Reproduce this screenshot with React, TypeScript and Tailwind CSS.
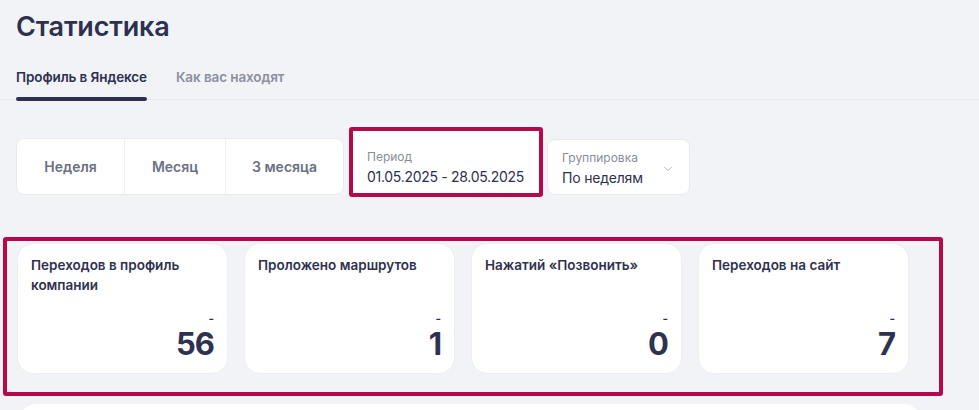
import { ChevronDown } from "lucide-react";

const stats = [
  { title: "Переходов в профиль компании", value: "56" },
  { title: "Проложено маршрутов", value: "1" },
  { title: "Нажатий «Позвонить»", value: "0" },
  { title: "Переходов на сайт", value: "7" },
];

function StatCard({ title, value }: { title: string; value: string }) {
  return (
    <div className="w-[211px] h-[131px] bg-white rounded-[16px] border border-[#eceef3] px-[13px] pt-[11px] pb-[14px] flex flex-col">
      <div className="text-[13.5px] leading-[20px] font-semibold text-[#2f3150] pr-4">{title}</div>
      <div className="mt-auto flex flex-col items-end">
        <div className="mb-[3px] text-[12px] leading-[12px] text-[#2f3150] font-semibold">-</div>
        <div className="text-[31px] leading-[31px] font-bold text-[#2f3150] tracking-[-1px]">{value}</div>
      </div>
    </div>
  );
}

export default function App() {
  return (
    <div
      className="w-[979px] h-[410px] overflow-hidden bg-[#f2f3f7]"
      style={{ fontFamily: "Inter, 'Noto Sans', sans-serif" }}
    >
      {/* Header */}
      <div className="pl-4 pt-[7px]">
        <h1 className="text-[27px] leading-[40px] font-semibold text-[#2e3050] tracking-[-0.2px]">Статистика</h1>
      </div>

      {/* Tabs */}
      <div className="mt-[20px] flex gap-[29px] pl-4 border-b border-[#e8e9ee]">
        <div className="relative pb-[14px] text-[13.5px] leading-[20px] font-semibold text-[#2e3050] -mb-[2px] tracking-[-0.1px]">
          Профиль в Яндексе
          <span className="absolute left-0 right-0 bottom-0 h-[4px] rounded-full bg-[#2e3050]" />
        </div>
        <div className="pb-[10px] text-[13.5px] leading-[20px] font-semibold text-[#8c8fa0] tracking-[-0.1px]">Как вас находят</div>
      </div>

      {/* Controls */}
      <div className="mt-[27px] pl-4 flex items-start">
        <div className="mt-[11px] h-[57px] flex bg-white rounded-[8px] border border-[#e9eaef] text-[14px] font-semibold text-[#6d7082]">
          <div className="w-[108px] flex items-center justify-center border-r border-[#eceef2]">Неделя</div>
          <div className="w-[101px] flex items-center justify-center border-r border-[#eceef2]">Месяц</div>
          <div className="w-[117px] flex items-center justify-center">3 месяца</div>
        </div>
        <div className="ml-[5px] w-[194px] h-[70px] border-[4px] border-[#b8084c] rounded-[3px] bg-white pl-[14px] pt-[18px]">
          <div className="text-[12px] leading-[16px] text-[#8a8c99]">Период</div>
          <div className="mt-[2px] text-[14px] leading-[20px] text-[#2e3050] tracking-[-0.3px]">01.05.2025 - 28.05.2025</div>
        </div>
        <div className="ml-[4px] mt-[12px] w-[143px] h-[56px] bg-white rounded-[8px] border border-[#e9eaef] pl-[14px] pt-[10px] flex">
          <div>
            <div className="text-[12px] leading-[16px] text-[#8a8c99]">Группировка</div>
            <div className="mt-[2px] text-[14px] leading-[20px] text-[#2e3050] tracking-[-0.2px]">По неделям</div>
          </div>
          <ChevronDown className="ml-auto mr-[14px] mt-[12px] w-[14px] h-[14px] text-[#adb0bb]" strokeWidth={1.5} />
        </div>
      </div>

      {/* Stats */}
      <div className="mt-[40px] ml-[3px] w-[940px] h-[159px] border-[4px] border-[#b8084c] rounded-[3px] pl-[10px] pt-[2px] flex gap-[16px]">
        {stats.map((s) => (
          <StatCard key={s.title} title={s.title} value={s.value} />
        ))}
      </div>

      <div className="mt-[8px] ml-[20px] w-[900px] h-[60px] bg-white rounded-[16px]" />
    </div>
  );
}
